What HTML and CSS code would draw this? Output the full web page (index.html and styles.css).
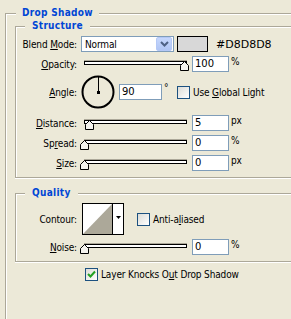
FILE: index.html
```html
<!DOCTYPE html>
<html lang="en">
  <head>
    <meta charset="UTF-8" />
    <title>Drop Shadow</title>
    <link rel="stylesheet" href="styles.css">
  </head>
  <body>
    <fieldset class="group outer">
      <legend>Drop Shadow</legend>

      <!-- Structure -->
      <fieldset class="group inner">
        <legend>Structure</legend>

        <div class="row">
          <label class="lbl">Blend <u>M</u>ode:</label>
          <div class="select">
            <span>Normal</span>
            <span class="select-btn">
              <svg width="9" height="6" viewBox="0 0 9 6"><polyline points="1,1 4.5,4.5 8,1" fill="none" stroke="#4d6185" stroke-width="2"/></svg>
            </span>
          </div>
          <div class="swatch"></div>
          <span class="hex">#D8D8D8</span>
        </div>

        <div class="row gap4">
          <label class="lbl"><u>O</u>pacity:</label>
          <div class="slider">
            <div class="track"></div>
            <svg class="thumb" style="left: 100px" width="9" height="10" viewBox="0 0 9 10"><path d="M0.5,9.5 V4.5 L4.5,0.5 L8.5,4.5 V9.5 Z" fill="#f4f3ee" stroke="#000"/></svg>
          </div>
          <div class="field">100</div>
          <span class="unit">%</span>
        </div>

        <div class="row angle-row">
          <label class="lbl"><u>A</u>ngle:</label>
          <svg class="dial" width="34" height="34" viewBox="0 0 34 34">
            <circle cx="17" cy="17" r="15.5" fill="none" stroke="#000" stroke-width="2"/>
            <line x1="17.5" y1="17" x2="17.5" y2="2" stroke="#000" stroke-width="1"/>
            <rect x="16" y="16" width="3" height="3" fill="#000"/>
          </svg>
          <div class="field wide">90</div>
          <span class="unit deg">°</span>
          <span class="check"></span>
          <span class="check-text">Use <u>G</u>lobal Light</span>
        </div>

        <div class="row gap6">
          <label class="lbl"><u>D</u>istance:</label>
          <div class="slider">
            <div class="track"></div>
            <svg class="thumb" style="left: 5px" width="9" height="10" viewBox="0 0 9 10"><path d="M0.5,9.5 V4.5 L4.5,0.5 L8.5,4.5 V9.5 Z" fill="#f4f3ee" stroke="#000"/></svg>
          </div>
          <div class="field">5</div>
          <span class="unit">px</span>
        </div>

        <div class="row gap4">
          <label class="lbl">Sp<u>r</u>ead:</label>
          <div class="slider">
            <div class="track"></div>
            <svg class="thumb" style="left: 0px" width="9" height="10" viewBox="0 0 9 10"><path d="M0.5,9.5 V4.5 L4.5,0.5 L8.5,4.5 V9.5 Z" fill="#f4f3ee" stroke="#000"/></svg>
          </div>
          <div class="field">0</div>
          <span class="unit">%</span>
        </div>

        <div class="row gap4">
          <label class="lbl"><u>S</u>ize:</label>
          <div class="slider">
            <div class="track"></div>
            <svg class="thumb" style="left: 0px" width="9" height="10" viewBox="0 0 9 10"><path d="M0.5,9.5 V4.5 L4.5,0.5 L8.5,4.5 V9.5 Z" fill="#f4f3ee" stroke="#000"/></svg>
          </div>
          <div class="field">0</div>
          <span class="unit">px</span>
        </div>
      </fieldset>

      <!-- Quality -->
      <fieldset class="group inner quality">
        <legend>Quality</legend>

        <div class="row contour-row">
          <label class="lbl">Contour:</label>
          <div class="contour">
            <svg class="contour-preview" width="29" height="30" viewBox="0 0 29 30">
              <rect width="29" height="30" fill="#fff"/>
              <polygon points="0,30 29,0 29,30" fill="#aca899"/>
            </svg>
            <span class="contour-btn">
              <svg width="5" height="3" viewBox="0 0 5 3"><polygon points="0,0 5,0 2.5,3" fill="#000"/></svg>
            </span>
          </div>
          <span class="check spaced"></span>
          <span class="check-text">Anti-a<u>l</u>iased</span>
        </div>

        <div class="row gap4">
          <label class="lbl"><u>N</u>oise:</label>
          <div class="slider">
            <div class="track"></div>
            <svg class="thumb" style="left: 0px" width="9" height="10" viewBox="0 0 9 10"><path d="M0.5,9.5 V4.5 L4.5,0.5 L8.5,4.5 V9.5 Z" fill="#f4f3ee" stroke="#000"/></svg>
          </div>
          <div class="field">0</div>
          <span class="unit">%</span>
        </div>
      </fieldset>

      <div class="knock-row">
        <span class="check">
          <svg width="11" height="11" viewBox="0 0 11 11"><polyline points="2,5 4.5,7.5 9,2.5" fill="none" stroke="#21a121" stroke-width="2"/></svg>
        </span>
        <span class="check-text">Layer Knocks O<u>u</u>t Drop Shadow</span>
      </div>
    </fieldset>
  </body>
</html>
```

FILE: styles.css
```css
html, body {
  margin: 0;
  padding: 0;
  overflow: hidden;
}

body {
  height: 319px;
  background-color: #ece9d8;
  font-family: 'DejaVu Sans Condensed', 'DejaVu Sans', sans-serif;
  font-size: 10px;
  letter-spacing: -0.15px;
  color: #000;
}

/* group boxes: etched lines, open to the right like the dialog edge */
.group {
  margin: 0;
  padding: 0;
  min-width: 0;
  border: 1px solid #aca899;
  border-right: none;
  box-shadow: inset 1px 1px 0 #fff, 0 1px 0 #fff;
}

.group legend {
  background-color: #ece9d8;
  color: #0046d5;
  font-weight: bold;
  letter-spacing: 0.3px;
  line-height: 12px;
}

.outer {
  margin: 7px 0 0 5px;
  padding: 1px 0 38px 9px;
  border-bottom: none;
  box-shadow: inset 1px 1px 0 #fff;
}

.outer > legend {
  margin-left: 1px;
  padding: 0 6px;
}

.inner {
  padding: 4px 0 6px 0;
}

.inner > legend {
  margin-left: 9px;
  padding: 0 7px;
}

.quality {
  margin-top: 9px;
}

/* rows */
.row {
  display: flex;
  align-items: center;
  height: 16px;
}

.gap4 {
  margin-top: 4px;
}

.gap6 {
  margin-top: 6px;
}

.angle-row {
  height: 34px;
  margin-top: 3px;
}

.contour-row {
  height: 32px;
}

.lbl {
  width: 61px;
  flex: none;
  text-align: right;
  margin-right: 4px;
}

/* blend mode select */
.select {
  display: flex;
  align-items: center;
  width: 93px;
  height: 16px;
  box-sizing: border-box;
  border: 1px solid #7f9db9;
  background-color: white;
  padding: 0 1px 0 3px;
}

.select-btn {
  display: flex;
  align-items: center;
  justify-content: center;
  margin-left: auto;
  width: 14px;
  height: 12px;
  border: 1px solid #b4c8f6;
  border-radius: 2px;
  background: linear-gradient(#c6d7fd, #b0c5f4);
}

.swatch {
  width: 31px;
  height: 16px;
  box-sizing: border-box;
  margin-left: 3px;
  border: 1px solid #000;
  background-color: #d8d8d8;
}

.hex {
  margin-left: 8px;
  font-family: 'DejaVu Sans', sans-serif;
  font-size: 11px;
  letter-spacing: 0;
}

/* sliders */
.slider {
  position: relative;
  width: 109px;
  height: 16px;
  margin-left: -1px;
  flex: none;
}

.track {
  width: 101px;
  height: 2px;
  margin: 5px 0 0 4px;
  border: 1px solid #000;
  background-color: white;
  box-shadow: 0 -1px 0 #aca899;
}

.thumb {
  position: absolute;
  top: 5px;
}

/* text fields */
.field {
  width: 37px;
  height: 16px;
  box-sizing: border-box;
  margin-left: 3px;
  padding-left: 2px;
  border: 1px solid #7f9db9;
  background-color: white;
  font-family: 'DejaVu Sans', sans-serif;
  letter-spacing: 0;
  line-height: 14px;
}

.field.wide {
  width: 43px;
  margin-left: 4px;
}

.unit {
  align-self: flex-start;
  margin-left: 2px;
  line-height: 12px;
}

.deg {
  align-self: center;
  width: 13px;
  margin-top: -8px;
}

.dial {
  flex: none;
}

/* checkboxes */
.check {
  display: flex;
  align-items: center;
  justify-content: center;
  width: 13px;
  height: 13px;
  box-sizing: border-box;
  border: 1px solid #1c5180;
  background: linear-gradient(135deg, #dcdcd7, #fff);
  flex: none;
}

.check-text {
  margin-left: 3px;
  white-space: nowrap;
}

.check.spaced {
  margin-left: 13px;
}

/* contour picker */
.contour {
  display: flex;
  width: 42px;
  height: 32px;
  box-sizing: border-box;
  margin-left: 1px;
  border: 1px solid #000;
}

.contour-preview {
  display: block;
  border-right: 1px solid #000;
}

.contour-btn {
  flex: 1;
  display: flex;
  justify-content: center;
  padding-top: 12px;
  background-color: white;
}

.knock-row {
  display: flex;
  align-items: center;
  height: 13px;
  margin: 6px 0 0 70px;
}
```
